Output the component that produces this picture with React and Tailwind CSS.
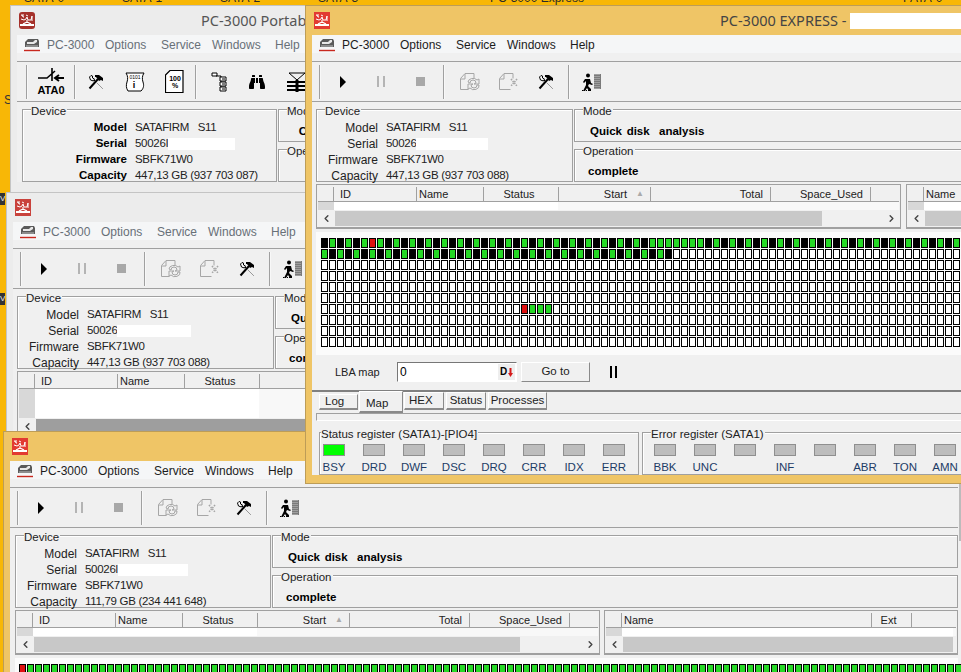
import React from 'react';
import { ChevronLeft, ChevronRight } from 'lucide-react';
import { FaBinoculars } from 'react-icons/fa';

// --- ICONS ---
const AppIcon = ({ bg = '#e23a32', rx = 0 }) => (
  <svg width="16" height="17" viewBox="0 0 16 17" className="shrink-0">
    <rect width="16" height="17" rx={rx} fill={bg} />
    <path d="M2 3h1v1h1v1h1M4 2v2M7 3l2 1M2 7l3 1 2-1 1-2 1 3h3l1-4v5" stroke="#fff" strokeWidth="1" fill="none" />
    <path d="M8 8v3M4 12l4-2 4 2" stroke="#fff" strokeWidth="1.2" fill="none" />
    <path d="M1 13h14" stroke="#fff" strokeWidth="2" />
  </svg>
);

const DiskIcon = () => (
  <svg width="16" height="15" viewBox="0 0 16 15" className="shrink-0">
    <path d="M1 5 4 2h10l1 2v6H1z" fill="#5a5a5a" />
    <path d="M3 5h6l2-2h2v2l-3 2H3z" fill="#e8e8e8" />
    <path d="M2 9h12" stroke="#bdbdbd" />
    <path d="M0 13.5h16" stroke="#c8281e" strokeWidth="1.4" />
  </svg>
);

const PlayIcon = () => (
  <svg width="8" height="12" viewBox="0 0 8 12"><path d="M1 0v12l6-6z" fill="#000" /></svg>
);
const PauseIcon = () => (
  <svg width="9" height="11" viewBox="0 0 9 11"><path d="M0 0h2v11H0zM6 0h2v11H6z" fill="#b4b4b4" /></svg>
);
const StopIcon = () => <div className="h-[9px] w-[9px] bg-[#a8a8a8]" />;

const RefreshDocIcon = () => (
  <svg width="21" height="18" viewBox="0 0 21 18" fill="none" stroke="#a6a6a6">
    <path d="M.5 5.5 5 .5h9v5M.5 5.5v11h8" />
    <path d="M1 6h4V1" />
    <path d="M8 9a5 4 0 0 1 9-2l2-1v5h-5l2-1a3 3 0 0 0-6 0zM19 12a5 4 0 0 1-9 3l-2 1v-5h5l-2 1a3 3 0 0 0 6 0z" />
  </svg>
);
const DocXIcon = () => (
  <svg width="21" height="18" viewBox="0 0 21 18" fill="none" stroke="#a6a6a6">
    <path d="M.5 5.5 5 .5h9v5M.5 5.5v11h11" />
    <path d="M1 6h4V1" />
    <path d="M12 6l6 7M18 6l-6 7" strokeDasharray="1.5 1" strokeWidth="1.6" />
  </svg>
);
const ToolsIcon = () => (
  <svg width="16" height="16" viewBox="0 0 16 16" fill="none">
    <path d="M1.5 14.5 10 5" stroke="#000" strokeWidth="2" />
    <path d="M7 1h4l4 3v3l-2-1-2 1-3-4H7z" fill="#000" />
    <path d="M14.5 14.5 6 6M3 1.5 1.500 3l1 3 3 1 1-2-2-1V2z" stroke="#000" strokeWidth="1" fill="#fff" />
    <path d="M14.5 14.5 8 8" stroke="#fff" strokeWidth=".6" />
  </svg>
);
const WalkerIcon = () => (
  <svg width="20" height="18" viewBox="0 0 20 18">
    <circle cx="6" cy="2.5" r="2" fill="#000" />
    <path d="M3 6h5l1 4 2 1-1 1-3-1-1 2 3 3v2H7l-2-3-2 3H1l3-6V8L2 10l-1-1z" fill="#000" />
    <path d="M0 17.5h10" stroke="#000" strokeDasharray="1 1" />
    <rect x="12" y="1" width="7" height="15" fill="#7a7a7a" />
    <path d="M13 1v15M15 1v15M17 1v15" stroke="#c4c4c4" strokeDasharray="1 1" />
  </svg>
);

// toolbar of the back window
const AtaIcon = () => (
  <div className="flex flex-col items-center">
    <svg width="28" height="16" viewBox="0 0 28 16" fill="none">
      <path d="M1 11h9l8-7M15 1v13" stroke="#000" strokeWidth="1.6" />
      <path d="M18 11h9M22 8l-4 3 4 3" stroke="#000" strokeWidth="2" />
    </svg>
    <span className="mt-[2px] text-[11px] leading-[11px] font-bold text-black">ATA0</span>
  </div>
);
const ChipIcon = () => (
  <svg width="22" height="22" viewBox="0 0 22 22" fill="none" stroke="#000">
    <path d="M2 2h18c-2 3-2 6-1 9s1 6-2 9H4c-2-3-2-6-1-9S4 5 2 2z" fill="#fff" />
    <text x="11" y="8" fontSize="5" fill="#000" stroke="none" textAnchor="middle">0101</text>
    <text x="10" y="17" fontSize="9" fontWeight="700" fill="#000" stroke="none" textAnchor="middle">i</text>
  </svg>
);
const PercentIcon = () => (
  <svg width="19" height="23" viewBox="0 0 19 23" fill="none" stroke="#000">
    <path d="M.5 5 5 .5h13v22H.5z" strokeWidth="1.2" fill="#fff" />
    <text x="10" y="11" fontSize="7" fontWeight="700" fill="#000" stroke="none" textAnchor="middle">100</text>
    <text x="10" y="18" fontSize="7" fontWeight="700" fill="#000" stroke="none" textAnchor="middle">%</text>
  </svg>
);
const TreeIcon = () => (
  <svg width="16" height="20" viewBox="0 0 16 20" fill="none" stroke="#000">
    <path d="M1 1h5v3H1z" fill="#fff" />
    <path d="M5 4h5v15M10 7h0M10 12h0" />
    <path d="M9 5h6v4H9zM9 10h6v4H9zM9 15h6v4H9z" fill="#fff" />
    <path d="M11 7h3M11 12h3M11 17h3" />
  </svg>
);
const FilterIcon = () => (
  <svg width="20" height="20" viewBox="0 0 20 20" fill="none" stroke="#000">
    <path d="M2 1h16l-8 7z" />
    <path d="M0 10h20M0 14h20M0 18h20" strokeWidth="2" />
    <path d="M10 8v12" strokeWidth="3" />
  </svg>
);

const Sep = () => <div className="h-[34px] w-[2px] shrink-0 border-l border-[#a0a0a0] bg-[#f8f8f8]" />;
const Slot = ({ w, children }) => <div className={`flex h-full shrink-0 items-center justify-center ${w}`}>{children}</div>;

const Toolbar = ({ pad, children }) => (
  <div className={`mt-[8px] flex h-[41px] items-center border-y border-[#a0a0a0] ${pad}`}>{children}</div>
);

const RunToolbar = ({ pad = 'pl-[7px]' }) => (
  <Toolbar pad={pad}>
    <Sep />
    <Slot w="w-[44px]"><PlayIcon /></Slot>
    <Slot w="w-[32px]"><PauseIcon /></Slot>
    <Slot w="w-[46px]"><StopIcon /></Slot>
    <Sep />
    <Slot w="w-[50px]"><RefreshDocIcon /></Slot>
    <Slot w="w-[28px]"><DocXIcon /></Slot>
    <Slot w="w-[45px]"><ToolsIcon /></Slot>
    <Sep />
    <Slot w="w-[44px]"><WalkerIcon /></Slot>
  </Toolbar>
);

const Menu = ({ dim }) => (
  <div className={`flex h-[18px] items-center bg-[#f5f6f7] pt-px pl-[7px] text-[12px] ${dim ? 'text-[#687078]' : 'text-[#1c1c1c]'}`}>
    <DiskIcon />
    <span className="ml-[7px] w-[58px]">PC-3000</span>
    <span className="w-[56px]">Options</span>
    <span className="w-[51px]">Service</span>
    <span className="w-[63px]">Windows</span>
    <span>Help</span>
  </div>
);

const Group = ({ title, className, legend = 'left-[8px]', children }) => (
  <div className={`relative border border-[#a0a0a0] shadow-[inset_1px_1px_0_#fff] ${className}`}>
    <span className={`absolute -top-[5px] bg-[#f0f0f0] pr-[1px] text-[11.5px] leading-[13px] text-[#222] ${legend}`}>{title}</span>
    {children}
  </div>
);

const DeviceRow = ({ label, bold, labelW, children }) => (
  <div className="flex h-[16px] items-center text-[12px] whitespace-pre text-[#222]">
    <span className={`shrink-0 text-right ${labelW} ${bold ? 'text-[11.5px] font-bold text-black' : ''}`}>{label}</span>
    <span className="ml-[8px] flex items-center text-[11.5px] tracking-[-.3px]">{children}</span>
  </div>
);

const Device = ({ bold, labelW, serial, blank, capacity, w }) => (
  <Group title="Device" className={`h-[73px] shrink-0 pt-[10px] ${w}`}>
    <DeviceRow label="Model" bold={bold} labelW={labelW}>SATAFIRM   S11</DeviceRow>
    <DeviceRow label="Serial" bold={bold} labelW={labelW}>
      {serial}<span className={`h-[12px] bg-white ${blank}`} />
    </DeviceRow>
    <DeviceRow label="Firmware" bold={bold} labelW={labelW}>SBFK71W0</DeviceRow>
    <DeviceRow label="Capacity" bold={bold} labelW={labelW}>{capacity}</DeviceRow>
  </Group>
);

const ModeOp = ({ mode = 'Quick disk  analysis', op = 'complete' }) => (
  <div className="ml-px flex min-w-0 flex-1 flex-col gap-[7px]">
    <Group title="Mode" className="h-[33px]">
      <div className="pt-[14px] pl-[15px] text-[11.5px] leading-[14px] font-bold [word-spacing:1.5px] whitespace-pre text-black">{mode}</div>
    </Group>
    <Group title="Operation" className="h-[33px]">
      <div className="pt-[14px] pl-[13px] text-[11.5px] leading-[14px] font-bold whitespace-pre text-black">{op}</div>
    </Group>
  </div>
);

// --- TABLE PANES ---
const Pane = ({ className, cols, rowClass = 'h-[8px]', rowWhite = 'w-[224px]', thumb, thumbTone = 'bg-[#c8c8c8]', rightArrow }) => (
  <div className={`flex flex-col border border-b-2 border-[#a0a0a0] p-px ${className}`}>
    <div className="flex h-[16px] shrink-0 border-b border-[#a0a0a0] pt-px text-[11px] text-[#222]">
      {cols.map((c, i) => (
        <div key={i} className={`flex shrink-0 items-center border-r border-[#a0a0a0] last:border-r-0 ${c.className}`}>{c.label}{c.sort && <span className="ml-[9px] text-[8px] text-[#aaa]">▲</span>}</div>
      ))}
    </div>
    <div className={`flex shrink-0 bg-white ${rowClass}`}>
      <div className="w-[16px] bg-[#d8d8d8]" />
      <div className={rowWhite} />
      <div className="flex-1 bg-[#f8f8f8]" />
    </div>
    <div className="flex h-[16px] shrink-0 items-center">
      <div className="flex w-[17px] justify-center"><ChevronLeft size={11} strokeWidth={3} color="#444" /></div>
      <div className={`h-[15px] ${thumbTone} ${thumb}`} />
      <div className="flex-1" />
      {rightArrow && <div className="flex w-[15px] justify-center"><ChevronRight size={11} strokeWidth={3} color="#444" /></div>}
    </div>
  </div>
);

const mainCols = [
  { className: 'w-[16px]', label: '' },
  { className: 'w-[83px] pl-[6px]', label: 'ID' },
  { className: 'w-[67px] pl-[2px]', label: 'Name' },
  { className: 'w-[75px] justify-center pr-[4px]', label: 'Status' },
  { className: 'w-[92px] justify-end pr-[6px]', label: 'Start', sort: true },
  { className: 'w-[120px] justify-end pr-[7px]', label: 'Total' },
  { className: 'w-[100px] justify-end pr-[7px]', label: 'Space_Used' },
  { className: 'flex-1', label: '' },
];

// --- MAP ---
const cellTone = {
  e: 'bg-white',
  g: 'bg-[#26d926]',
  r: 'bg-[#e01010]',
  k: 'bg-black',
};

const mapCell = (row, col) => {
  if (row === 0) {
    if (col === 6) return 'r';
    return col % 2 === 1 || col === 42 || col === 44 || col === 46 ? 'g' : 'k';
  }
  if (row === 1) {
    if (col >= 44) return 'e';
    return col % 2 === 0 ? 'g' : 'k';
  }
  if (row === 6) {
    if (col === 25) return 'r';
    if (col >= 26 && col <= 28) return 'g';
  }
  return 'e';
};

const Cell = ({ tone }) => <div className={`h-[10px] w-[7px] border border-black ${cellTone[tone]}`} />;

const LbaMap = () => (
  <div className="mt-[3px] ml-[4px] h-[123px] bg-[#fbfbfb] pt-[6px] pl-[5px]">
    <div className="grid grid-cols-[repeat(80,8px)] auto-rows-[11px]">
      {Array.from({ length: 10 }).flatMap((_, r) =>
        Array.from({ length: 80 }).map((_, c) => <Cell key={`${r}-${c}`} tone={mapCell(r, c)} />)
      )}
    </div>
  </div>
);

const Raised = 'border border-t-white border-l-white border-r-[#8a8a8a] border-b-[#8a8a8a]';

const LbaBar = () => (
  <div className="mt-[6px] flex h-[29px] items-start pt-px pl-[23px] text-[11px] text-[#222]">
    <span className="mt-[2px] w-[62px]">LBA map</span>
    <div className="flex h-[20px] w-[120px] items-center border border-t-[#777] border-l-[#777] border-r-white border-b-white bg-white pl-[2px] text-[12px] text-black">
      <span className="flex-1">0</span>
      <span className="mr-px flex h-[16px] w-[17px] items-center justify-center gap-px bg-[#eeeeee] text-[10px] leading-none font-bold text-black">
        D
        <svg width="5" height="9" viewBox="0 0 5 9"><path d="M1.500 0h2v5H5L2.500 9 0 5h1.500z" fill="#d41a1a" /></svg>
      </span>
    </div>
    <div className={`ml-[4px] flex h-[20px] w-[69px] items-center justify-center bg-[#f0f0f0] text-[11.5px] ${Raised}`}>Go to</div>
    <div className="mt-[4px] ml-[20px] flex h-[12px] gap-[3px]">
      <div className="w-[2px] bg-black" />
      <div className="w-[2px] bg-black" />
    </div>
  </div>
);

const tabBase = 'flex items-center border border-b-2 border-t-white border-l-white border-r-[#8a8a8a] border-b-[#8a8a8a] text-[11.5px] text-[#222]';

const Tabs = () => (
  <div className="border-t-2 border-[#808080]">
    <div className="flex h-[21px] pl-[7px]">
      <div className={`mt-[2px] h-[16px] w-[39px] pt-px pl-[5px] ${tabBase}`}>Log</div>
      <div className={`-mt-px ml-px h-[22px] w-[44px] pt-[4px] pl-[6px] ${tabBase}`}>Map</div>
      <div className={`ml-px h-[18px] w-[40px] pt-px pl-[4px] ${tabBase}`}>HEX</div>
      <div className={`ml-[2px] h-[18px] w-[40px] justify-center pt-px ${tabBase}`}>Status</div>
      <div className={`ml-[2px] h-[18px] w-[59px] justify-center pt-px ${tabBase}`}>Processes</div>
    </div>
    <div className="ml-[4px] h-[8px] border-t border-b border-l border-[#a0a0a0] border-b-white" />
  </div>
);

const Reg = ({ label, on }) => (
  <div className="flex w-[40px] shrink-0 flex-col items-center">
    <div className={`h-[12px] w-[22px] border border-[#8f8f8f] ${on ? 'bg-[#00ff00]' : 'bg-[#bdbdbd]'}`} />
    <span className="mt-[4px] h-[14px] text-[11.5px] leading-[14px] text-[#1d3c66]">{label}</span>
  </div>
);

const Registers = () => (
  <div className="mt-[11px] ml-[7px] flex h-[43px] gap-[3px]">
    <Group title="Status register (SATA1)-[PIO4]" legend="left-px" className="w-[320px] shrink-0">
      <div className="-ml-[6px] flex pt-[11px]">
        {['BSY', 'DRD', 'DWF', 'DSC', 'DRQ', 'CRR', 'IDX', 'ERR'].map((l, i) => <Reg key={l} label={l} on={i === 0} />)}
      </div>
    </Group>
    <Group title="Error register (SATA1)" className="flex-1">
      <div className="flex pt-[11px] pl-[2px]">
        {['BBK', 'UNC', '', 'INF', '', 'ABR', 'TON', 'AMN'].map((l, i) => <Reg key={i} label={l} />)}
      </div>
    </Group>
  </div>
);

// --- WINDOW SHELL ---
const Win = ({ className, active, iconBg, iconRx, innerClass = '', title, children }) => (
  <div className={`absolute overflow-hidden border px-[6px] ${active ? 'border-[#bd9d57] bg-[#efc566]' : 'border-[#c4c4c4] bg-[#ececec]'} ${className}`}>
    <div className="flex h-[29px] items-center font-['Noto_Sans',sans-serif] text-[14.5px] whitespace-pre text-[#444]">
      <div className="ml-[2px]"><AppIcon bg={iconBg} rx={iconRx} /></div>
      {title}
    </div>
    <div className={`bg-[#f0f0f0] ${innerClass}`}>{children}</div>
  </div>
);

const desktopLabels = [
  { t: 'SATA-0', c: 'left-[24px]' },
  { t: 'SATA-1', c: 'left-[122px]' },
  { t: 'SATA-2', c: 'left-[220px]' },
  { t: 'SATA-3', c: 'left-[318px]' },
  { t: 'PC-3000 Express', c: 'left-[490px]' },
  { t: 'PATA-0', c: 'left-[903px]' },
];

export default function App() {
  return (
    <div className="relative h-[672px] w-[961px] overflow-hidden bg-[#f8b706] font-['Liberation_Sans',sans-serif]">
      {/* desktop icon captions peeking out above the windows */}
      {desktopLabels.map((l) => (
        <span key={l.t} className={`absolute -top-[11px] text-[12px] text-[#2a2a2a] ${l.c}`}>{l.t}</span>
      ))}
      <span className="absolute top-[91px] left-[4px] text-[12px] text-[#333]">S</span>
      <span className="absolute top-[193px] left-0 bg-[#333] text-[8px] text-[#eee]">V</span>
      <span className="absolute top-[293px] left-0 bg-[#333] text-[8px] text-[#eee]">V</span>

      {/* back window: Portable */}
      <Win
        className="top-[5px] left-[10px] h-[190px] w-[310px]"
        iconBg="#a5312b"
        iconRx={3}
        title={<span className="ml-[166px] text-[#555]">PC-3000 Portable III</span>}
      >
        <Menu dim />
        <Toolbar pad="pl-[9px]">
          <Sep />
          <Slot w="w-[46px]"><AtaIcon /></Slot>
          <Sep />
          <Slot w="w-[40px]"><ToolsIcon /></Slot>
          <Slot w="w-[38px]"><ChipIcon /></Slot>
          <Slot w="w-[41px]"><PercentIcon /></Slot>
          <Sep />
          <Slot w="w-[44px]"><TreeIcon /></Slot>
          <Slot w="w-[32px]"><FaBinoculars size={16} color="#000" /></Slot>
          <Slot w="w-[48px]"><FilterIcon /></Slot>
        </Toolbar>
        <div className="mt-[7px] flex pl-[5px]">
          <Device bold labelW="w-[104px]" serial="50026I" blank="w-[67px]" capacity="447,13 GB (937 703 087)" w="w-[255px]" />
          <ModeOp mode=" C" op="" />
        </div>
      </Win>

      {/* second window */}
      <Win
        className="top-[192px] left-[6px] h-[245px] w-[310px]"
        iconBg="#c9423c"
      >
        <Menu dim />
        <RunToolbar />
        <div className="mt-[7px] flex pl-[4px]">
          <Device labelW="w-[61px]" serial="50026" blank="w-[74px]" capacity="447,13 GB (937 703 088)" w="w-[257px]" />
          <ModeOp />
        </div>
        <div className="mt-[2px] pl-[4px]">
          <Pane className="w-[585px]" cols={mainCols} rowClass="h-[29px]" thumb="w-[487px]" thumbTone="bg-[#9e9e9e]" rightArrow />
        </div>
      </Win>

      {/* bottom window */}
      <Win
        className="top-[431px] left-[3px] h-[260px] w-[975px]"
        active
        innerClass="pr-[13px]"
      >
        <Menu />
        <RunToolbar />
        <div className="mt-[7px] flex pl-[5px]">
          <Device labelW="w-[61px]" serial="50026l" blank="w-[70px]" capacity="111,79 GB (234 441 648)" w="w-[256px]" />
          <ModeOp />
        </div>
        <div className="mt-[2px] flex gap-[4px] pl-[5px]">
          <Pane className="w-[585px] shrink-0" cols={mainCols} thumb="w-[486px]" rightArrow />
          <Pane
            className="flex-1"
            cols={[
              { className: 'w-[16px]', label: '' },
              { className: 'w-[250px] pl-[2px]', label: 'Name' },
              { className: 'w-[40px] justify-center pr-[6px]', label: 'Ext' },
              { className: 'flex-1', label: '' },
            ]}
            rowWhite="flex-[100]"
            thumb="flex-[100]"
          />
        </div>
        <div className="mt-[3px] ml-[5px] h-[30px] bg-[#fbfbfb] pt-[6px] pl-[4px]">
          <div className="flex gap-px">
            {Array.from({ length: 118 }).map((_, c) => <div key={c} className="shrink-0"><Cell tone={c === 0 ? 'r' : 'g'} /></div>)}
          </div>
        </div>
      </Win>

      {/* edge of a scrollbar showing right of the bottom window */}
      <div className="absolute top-[484px] left-[959px] h-[57px] w-[2px] bg-[#bbbbbb]" />

      {/* front window */}
      <Win
        className="top-[5px] left-[305px] h-[479px] w-[700px]"
        active
        title={
          <>
            <span className="ml-[390px] text-[#444]">PC-3000 EXPRESS - </span>
            <span className="h-[16px] w-[120px] bg-white" />
          </>
        }
      >
        <Menu />
        <RunToolbar />
        <div className="mt-[7px] flex pl-[4px]">
          <Device labelW="w-[61px]" serial="50026" blank="w-[72px]" capacity="447,13 GB (937 703 088)" w="w-[257px]" />
          <ModeOp />
        </div>
        <div className="mt-[2px] flex gap-[5px] pl-[4px]">
          <Pane className="w-[585px] shrink-0" cols={mainCols} thumb="w-[487px]" rightArrow />
          <Pane
            className="flex-1"
            cols={[
              { className: 'w-[16px]', label: '' },
              { className: 'flex-1 pl-[2px]', label: 'Name' },
            ]}
            rowWhite="w-[40px]"
            thumb="flex-[3]"
          />
        </div>
        <LbaMap />
        <LbaBar />
        <Tabs />
        <Registers />
      </Win>
    </div>
  );
}
